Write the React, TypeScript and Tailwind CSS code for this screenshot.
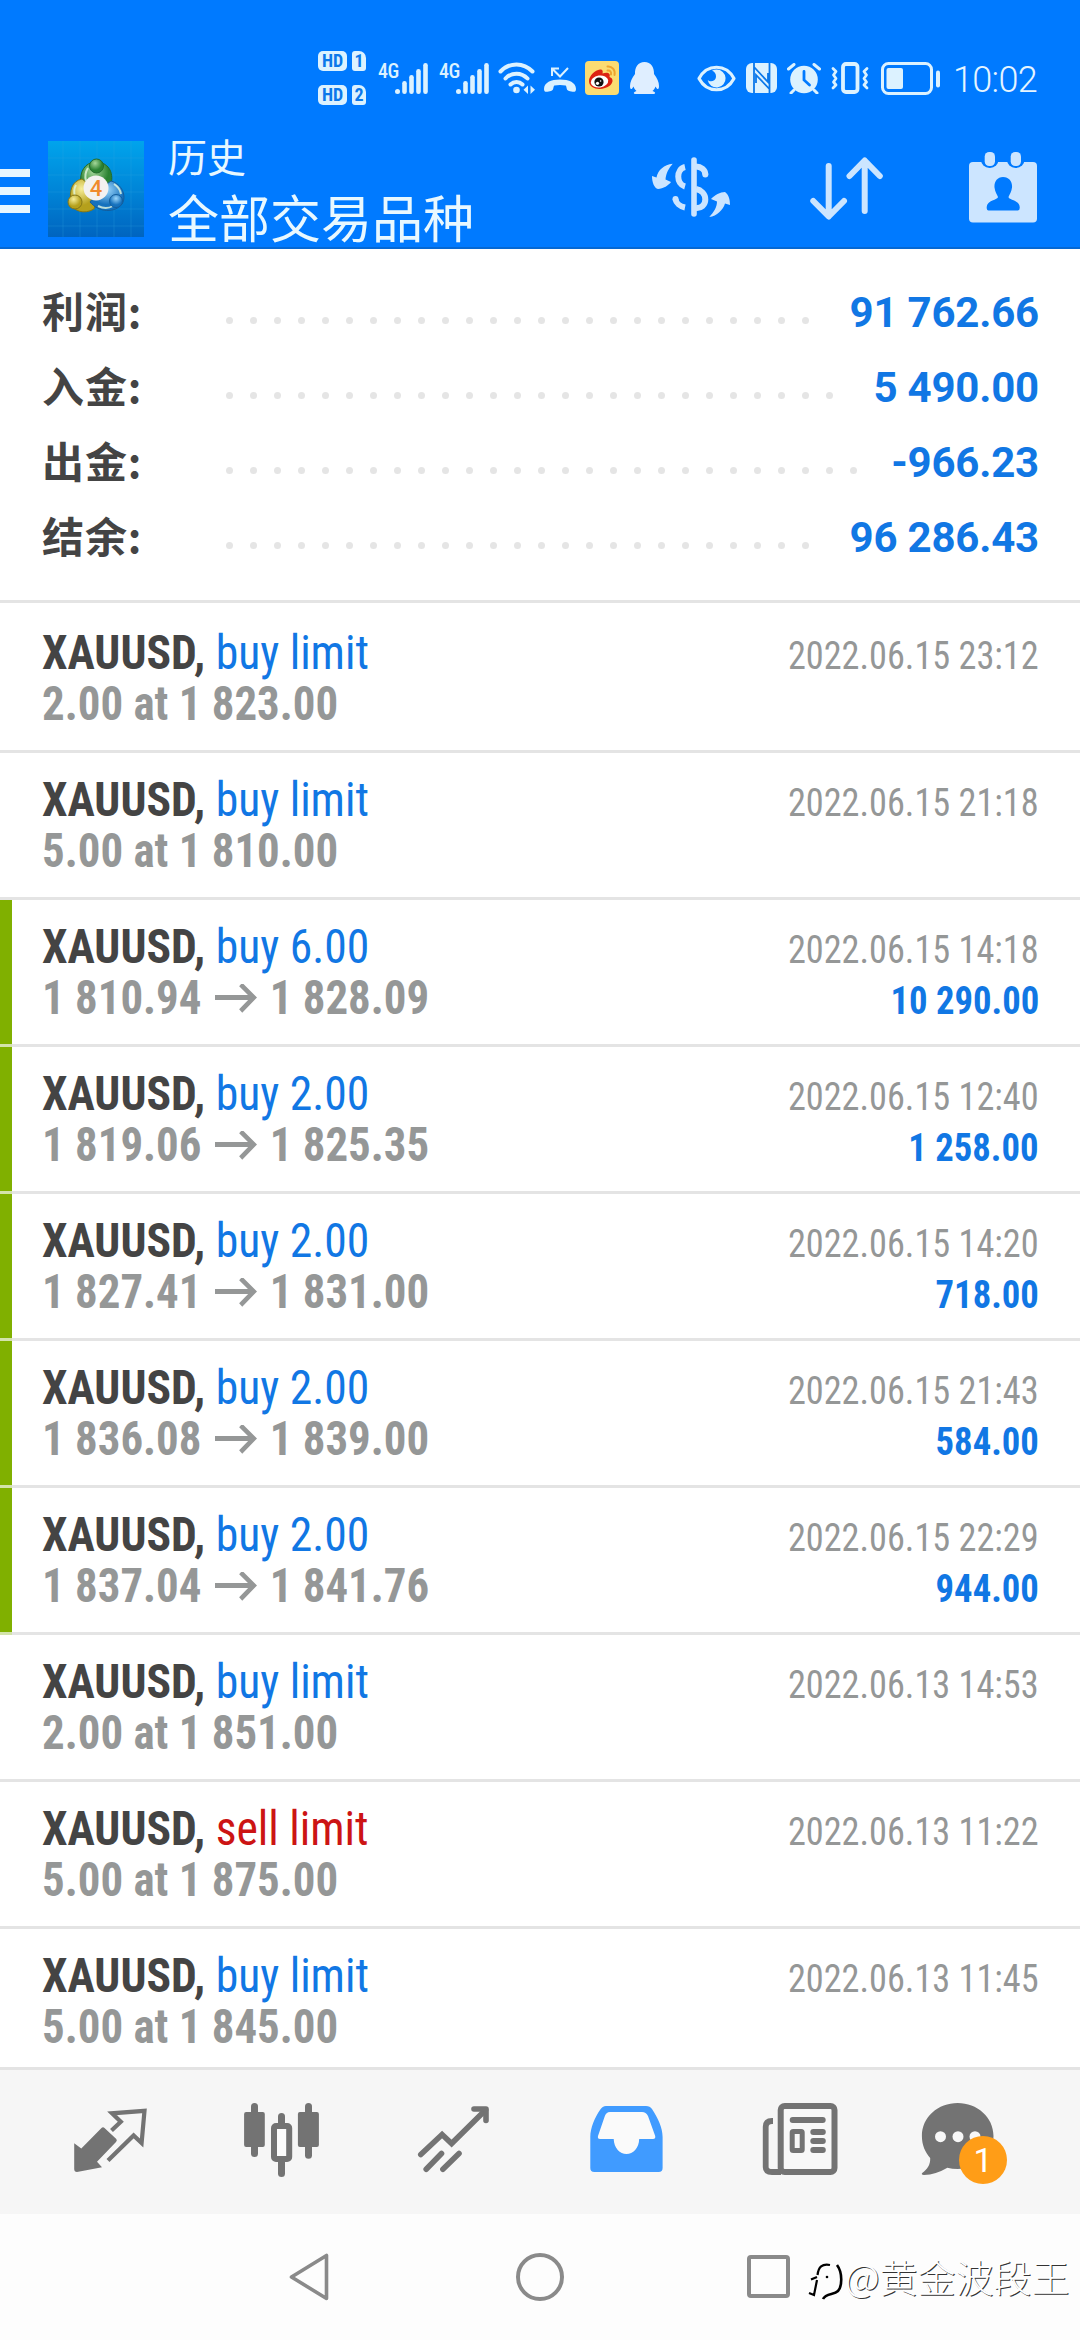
import { type FC, type ReactNode } from "react";
import clsx from "clsx";

interface Deal {
  action: string;
  time: string;
  sell?: boolean;
  order?: string;
  from?: string;
  to?: string;
  profit?: string;
}

const SUMMARY = [
  { label: "利润:", value: "91 762.66" },
  { label: "入金:", value: "5 490.00" },
  { label: "出金:", value: "-966.23" },
  { label: "结余:", value: "96 286.43" },
];

const DEALS: Array<Deal> = [
  { action: "buy limit", time: "2022.06.15 23:12", order: "2.00 at 1 823.00" },
  { action: "buy limit", time: "2022.06.15 21:18", order: "5.00 at 1 810.00" },
  { action: "buy 6.00", time: "2022.06.15 14:18", from: "1 810.94", to: "1 828.09", profit: "10 290.00" },
  { action: "buy 2.00", time: "2022.06.15 12:40", from: "1 819.06", to: "1 825.35", profit: "1 258.00" },
  { action: "buy 2.00", time: "2022.06.15 14:20", from: "1 827.41", to: "1 831.00", profit: "718.00" },
  { action: "buy 2.00", time: "2022.06.15 21:43", from: "1 836.08", to: "1 839.00", profit: "584.00" },
  { action: "buy 2.00", time: "2022.06.15 22:29", from: "1 837.04", to: "1 841.76", profit: "944.00" },
  { action: "buy limit", time: "2022.06.13 14:53", order: "2.00 at 1 851.00" },
  { action: "sell limit", time: "2022.06.13 11:22", sell: true, order: "5.00 at 1 875.00" },
  { action: "buy limit", time: "2022.06.13 11:45", order: "5.00 at 1 845.00" },
];

const SimBadge: FC<{ sim: string }> = ({ sim }) => (
  <div className="flex gap-[5px] h-5 font-['Roboto_Condensed'] font-bold text-[18px] leading-5 text-[#0b78ea] text-center">
    <span className="w-[29px] rounded-[5px] bg-[#dcf2ff]">HD</span>
    <span className="w-[14px] rounded-[3px] rounded-tr-[7px] bg-[#dcf2ff]">{sim}</span>
  </div>
);

const Signal = () => (
  <div className="flex">
    <span className="-mt-0.5 w-[17px] font-['Roboto_Condensed'] font-medium text-[20px] leading-5 tracking-[-0.5px] text-[#dcf2ff]">
      4G
    </span>
    <svg className="w-[33px] h-[31px]" viewBox="0 0 33 31" fill="#dcf2ff">
      <circle cx="2.5" cy="28.5" r="2.5" />
      <rect x="7.2" y="18" width="4.6" height="13" rx="2.3" />
      <rect x="14.2" y="12" width="4.6" height="19" rx="2.3" />
      <rect x="21.2" y="6" width="4.6" height="25" rx="2.3" />
      <rect x="28.2" y="0" width="4.6" height="31" rx="2.3" />
    </svg>
  </div>
);

const StatusBar = () => (
  <div className="flex items-center h-[120px] pl-[318px] pt-9">
    <div className="flex flex-col gap-[14px]">
      <SimBadge sim="1" />
      <SimBadge sim="2" />
    </div>
    <div className="flex gap-[11px] ml-3">
      <Signal />
      <Signal />
    </div>
    {/* wifi */}
    <svg className="ml-[9px] w-[38px] h-8" viewBox="0 0 38 32" fill="none" stroke="#dcf2ff" strokeWidth="4" strokeLinecap="round">
      <path d="M2.5 9.5C11.500 0 25.500 0 34.500 9.500" />
      <path d="M7.500 16.500C13.500 10 23.500 10 29.500 16.500" />
      <path d="M12.500 22.500C16 19 21 19 24.500 22.500" />
      <circle cx="18.500" cy="28" r="3.300" fill="#dcf2ff" stroke="none" />
      <path d="M30 23.500V32L25.500 27.700ZM32.500 23.500V32L37 27.700Z" fill="#dcf2ff" stroke="none" />
    </svg>
    {/* missed call */}
    <svg className="ml-2 mt-1 w-8 h-[26px]" viewBox="0 0 32 26" fill="#dcf2ff">
      <path d="M0 22C0 15.500 7 12.500 16 12.500S32 15.500 32 22C32 26 29 25 24.500 23.800C22 23 23 19 21.500 18.500Q16 17.500 10.500 18.500C9 19 10 23 7.500 23.800C3 25 0 26 0 22Z" />
      <path d="M8 9V1.500H15M8 1.500L16 9.500L24 1" fill="none" stroke="#dcf2ff" strokeWidth="2" />
    </svg>
    {/* weibo */}
    <svg className="ml-[9px] w-[34px] h-[34px]" viewBox="0 0 34 34">
      <rect width="34" height="34" rx="4" fill="#fbdc72" />
      <path d="M4 20C4 15 10 9 15 8.500C18 8.500 18 10.500 17.500 12.500C21 11 26 11 24.500 16C29 17.500 28 22 25 24.500C18 30 4 29 4 20Z" fill="#dc2213" />
      <ellipse cx="14.500" cy="20.500" rx="8.800" ry="6" fill="#fff" transform="rotate(-8 14.500 20.500)" />
      <circle cx="14" cy="21" r="4.600" fill="#111" />
      <circle cx="12.500" cy="22.300" r="1.600" fill="#fff" />
      <circle cx="15.600" cy="20" r=".8" fill="#fff" />
      <path d="M22.500 5.500C27 5 30.500 9 29.500 14M22.500 9.500C25 9 26.500 11 26 13.500" fill="none" stroke="#eda42f" strokeWidth="2" strokeLinecap="round" />
    </svg>
    {/* qq */}
    <svg className="ml-[11px] w-[29px] h-8" viewBox="0 0 29 32" fill="#dfeeff">
      <path d="M14.500 0C8 0 4.800 5 5 12C2 16 0 20 0 24C0 28 1.500 28 3.600 24.500C4.200 26.500 5 27.800 6.500 29C3 30 3 32 6 32H23C26 32 26 30 22.500 29C24 27.800 24.800 26.500 25.400 24.500C27.500 28 29 28 29 24C29 20 27 16 24 12C24.200 5 21 0 14.500 0Z" />
    </svg>
    {/* eye */}
    <svg className="ml-[38px] w-[39px] h-[27px]" viewBox="0 0 39 27">
      <path d="M2 13.500C10 -1.500 29 -1.500 37 13.500C29 28.500 10 28.500 2 13.500Z" fill="none" stroke="#dcf2ff" strokeWidth="3.200" strokeLinejoin="round" />
      <path d="M19.500 4.500A9 9 0 1 1 10.700 15C13 17.500 18.500 16.500 19 12C19.300 9 17.500 6.500 15 5.800Q17 4.500 19.500 4.500Z" fill="#dcf2ff" />
    </svg>
    {/* nfc */}
    <svg className="ml-2.5 w-[31px] h-[30px]" viewBox="0 0 31 30">
      <rect width="31" height="30" rx="6" fill="#dcf2ff" />
      <path d="M8 30V4L22 19V10M8 4V0M23.500 0V26L10 12V20M23.500 26V30" fill="none" stroke="#0b78ea" strokeWidth="1.800" />
    </svg>
    {/* alarm */}
    <svg className="ml-2.5 w-[34px] h-[31px]" viewBox="0 0 34 31">
      <circle cx="17" cy="16.500" r="13.800" fill="#dcf2ff" />
      <path d="M1.500 6L7 1.500M32.500 6L27 1.500M7 27L4 30M27 27L30 30" stroke="#dcf2ff" strokeWidth="3" strokeLinecap="round" />
      <path d="M17 8.500V17L22.500 22" fill="none" stroke="#007aff" strokeWidth="2.800" strokeLinecap="round" />
    </svg>
    {/* vibrate */}
    <svg className="ml-2.5 w-[38px] h-8" viewBox="0 0 38 32" fill="none" stroke="#dcf2ff" strokeLinecap="round" strokeLinejoin="round">
      <rect x="12" y="2" width="14.500" height="28" rx="3" strokeWidth="3.800" />
      <path d="M2 6.500L5 9.500L2.500 13L5 16.500L2.500 20L5 23L2 26M36 6.500L33 9.500L35.500 13L33 16.500L35.500 20L33 23L36 26" strokeWidth="2.800" />
    </svg>
    {/* battery */}
    <svg className="ml-3 w-[60px] h-[33px]" viewBox="0 0 60 33" fill="none">
      <rect x="1.500" y="1.500" width="49" height="30" rx="6" stroke="#dcf2ff" strokeWidth="3" />
      <rect x="5.500" y="6" width="16.500" height="21" rx="2" fill="#dcf2ff" />
      <rect x="55" y="8.500" width="4" height="17" rx="2" fill="#dcf2ff" />
    </svg>
    <span className="ml-3 mt-[3px] font-['Roboto'] font-[350] text-[36px] leading-[36px] tracking-[-0.7px] text-[#e6f5ff]">10:02</span>
  </div>
);

const AppLogo = () => (
  <svg className="w-24 h-24" viewBox="0 0 96 96">
    <defs>
      <linearGradient id="tile" x1="0" y1="0" x2="0" y2="1">
        <stop offset="0" stopColor="#00a4ec" />
        <stop offset=".5" stopColor="#0086d8" />
        <stop offset="1" stopColor="#0064bf" />
      </linearGradient>
      <radialGradient id="green" cx=".4" cy=".3">
        <stop offset="0" stopColor="#a5d79a" />
        <stop offset="1" stopColor="#2b8232" />
      </radialGradient>
      <radialGradient id="yellow" cx=".4" cy=".3">
        <stop offset="0" stopColor="#f7ee9a" />
        <stop offset="1" stopColor="#b5a01c" />
      </radialGradient>
      <radialGradient id="sky" cx=".5" cy=".3">
        <stop offset="0" stopColor="#9bd6fb" />
        <stop offset="1" stopColor="#1671bd" />
      </radialGradient>
    </defs>
    <rect width="96" height="96" fill="url(#tile)" />
    <path d="M0 17H96M0 34H96M0 51H96M0 68H96M0 85H96M15 0V96M32 0V96M49 0V96M66 0V96M83 0V96" stroke="#35a8e4" strokeOpacity=".25" />
    <path d="M48 21C37 21 31 31 33 43L48 52L63 43C66 31 60 21 48 21Z" fill="url(#green)" stroke="#236b2c" />
    <path d="M34 38C24 40 21 49 23 62C25 70 36 74 46 68L50 50Z" fill="url(#yellow)" stroke="#857616" />
    <path d="M63 40C74 43 79 55 74 63C67 72 51 72 42 61L52 48Z" fill="url(#sky)" stroke="#135d9c" />
    <path d="M40 27Q36 33 38 40M28 44Q25 49 27 55M50 65Q58 69 65 65M66 43Q72 47 73 53" fill="none" stroke="#e4f7e0" strokeWidth="2" strokeOpacity=".8" />
    <circle cx="48.500" cy="25" r="7" fill="url(#green)" stroke="#236b2c" />
    <circle cx="27" cy="61" r="7" fill="url(#yellow)" stroke="#857616" />
    <circle cx="68" cy="60" r="6.500" fill="url(#sky)" stroke="#135d9c" />
    <circle cx="48" cy="47" r="12.500" fill="#f3f1f0" />
    <text x="48" y="55" textAnchor="middle" fontFamily="Roboto" fontSize="22" fontWeight="500" fill="#f08a2c">4</text>
  </svg>
);

const Header = () => (
  <header className="h-[249px] bg-[#007aff] border-b-2 border-[#0568d3]">
    <StatusBar />
    <div className="flex h-[127px]">
      <div className="flex flex-col gap-2.5 w-[30px] pt-[49px]">
        <span className="h-2 bg-[#e8f6ff]" />
        <span className="h-2 bg-[#e8f6ff]" />
        <span className="h-2 bg-[#e8f6ff]" />
      </div>
      <div className="ml-[18px] pt-[21px]">
        <AppLogo />
      </div>
      <div className="ml-6 pt-2.5 font-['Noto_Sans_CJK_SC'] text-[#e8f8ff]">
        <div className="text-[39px] leading-[50px]">历史</div>
        <div className="text-[51px] leading-[72px]">全部交易品种</div>
      </div>
      <svg className="ml-[178px] mt-[37px] w-[78px] h-[60px]" viewBox="0 0 78 60" fill="none" stroke="#cce5ff">
        <path d="M33 10C24 12 24 27 33 29.500M44 9.500C49 9.500 53.300 13 53.300 17.500M44 32C49 33 53.300 37 53.300 42.500C53.300 48 49 51.500 44 51M23.500 42C24 46 28 49.500 33 50.500" strokeWidth="6" />
        <path d="M42 3V57" strokeWidth="5.600" strokeLinecap="round" />
        <circle cx="53.300" cy="17.500" r="3" fill="#cce5ff" stroke="none" />
        <circle cx="23.500" cy="42" r="3" fill="#cce5ff" stroke="none" />
        <path d="M20.700 6.700C12 7.500 6 13 4.500 20.500L0 19C0 25 2 31 6 32C11 32 17 28 19 25L13.500 22.500C14 16 17 11 20.700 6.700ZM57.300 60C62 55 65 50 65 44.500L59 42C63 38 68 35 73 35C77 38 78 43 78 48L73 46.500C71 53 65 59 57.300 60Z" fill="#cce5ff" stroke="none" />
      </svg>
      <svg className="ml-20 mt-[37px] w-[74px] h-[64px]" viewBox="0 0 74 64" fill="none" stroke="#cce5ff" strokeWidth="6" strokeLinecap="round" strokeLinejoin="round">
        <path d="M18.700 9V59M3.300 44L18.700 59.500L34 44M54.700 54V4M39.500 19L54.700 3.500L69.800 19" />
      </svg>
      <svg className="ml-[85px] mt-[32px] w-[69px] h-[71px]" viewBox="0 0 69 71">
        <rect y="10" width="68" height="60.500" rx="4" fill="#cce5ff" />
        <rect x="12" y="-6" width="17.500" height="22" rx="8.500" fill="#007aff" />
        <rect x="38" y="-6" width="17.500" height="22" rx="8.500" fill="#007aff" />
        <rect x="15.700" y="0" width="10.300" height="14" rx="4.500" fill="#cce5ff" />
        <rect x="41.700" y="0" width="10.300" height="14" rx="4.500" fill="#cce5ff" />
        <path d="M34 25C28 25 25 30 25.500 35.500C26 40 28 42.500 29 45C29 48 18 48 17.700 55Q17.500 58.500 19.500 58.500H49Q51 58.500 50.700 55C50.500 48 39.500 48 39.500 45C40.500 42.500 42.500 40 43 35.500C43.500 30 40.500 25 34 25Z" fill="#007aff" />
      </svg>
    </div>
  </header>
);

const Summary = () => (
  <section className="flex flex-col h-[354px] pt-[25px] border-b-[3px] border-[#e4e4e4]">
    {SUMMARY.map(({ label, value }) => (
      <div key={label} className="flex items-center h-[75px] pl-[42px] pr-[42px]">
        <span className="w-[184px] -mt-1 font-['Noto_Sans_CJK_SC'] font-bold text-[42px] leading-[60px] tracking-[0.9px] text-[#444]">{label}</span>
        <div className="flex flex-1 flex-wrap gap-x-[17px] h-[7px] mt-[17px] mr-[30px] overflow-hidden">
          {Array.from({ length: 30 }, (_, i) => (
            <span key={i} className="size-[7px] rounded-full bg-[#e5e5e5]" />
          ))}
        </div>
        <span className="mt-[3px] -mr-px font-['Roboto'] font-bold text-[42px] leading-[60px] tracking-[-0.2px] text-[#1177e4]">{value}</span>
      </div>
    ))}
  </section>
);

const DealRow: FC<{ deal: Deal; first: boolean }> = ({ deal, first }) => (
  <div className={clsx("flex shrink-0", first ? "h-[150px]" : "h-[147px]")}>
    <div className={clsx("w-3 border-b-[3px]", deal.profit ? "bg-[#80b000] border-[#d3e3ab]" : "border-[#e4e4e4]")} />
    <div
      className={clsx(
        "flex-1 pl-[30px] pr-[41px] border-b-[3px] border-[#e4e4e4] font-['Roboto_Condensed'] leading-[51px]",
        first ? "pt-6" : "pt-[21px]",
      )}
    >
      <div className="flex items-baseline justify-between h-[51px]">
        <div className="origin-left scale-x-[0.95] text-5xl leading-[51px]">
          <span className="font-bold text-[#444]">XAUUSD,</span>
          <span className={clsx("ml-[11px]", deal.sell ? "text-[#cc1414]" : "text-[#1177e4]")}>{deal.action}</span>
        </div>
        <span className="origin-right scale-x-[0.93] text-[39px] leading-[51px] text-[#959797]">{deal.time}</span>
      </div>
      <div className="flex items-baseline justify-between h-[51px]">
        <div className="flex items-baseline origin-left scale-x-[0.935] text-5xl leading-[51px] font-bold text-[#959797]">
          {deal.order}
          {deal.from && (
            <>
              <span>{deal.from}</span>
              <svg className="mx-3.5 w-[45px] h-[30px]" viewBox="0 0 45 30" fill="none" stroke="#959797" strokeWidth="4.800">
                <path d="M0 13.500H41.500M27.500 0.500L41.500 13.500L27.500 27" />
              </svg>
              <span>{deal.to}</span>
            </>
          )}
        </div>
        <span className="origin-right scale-x-[0.94] text-[39px] leading-[51px] font-bold text-[#1177e4]">{deal.profit}</span>
      </div>
    </div>
  </div>
);

const Tab: FC<{ active?: boolean; children: ReactNode }> = ({ active, children }) => (
  <svg className={clsx("w-[172px] h-36", active ? "text-[#409bff]" : "text-[#737373]")} viewBox="0 0 172 144" fill="currentColor">
    {children}
  </svg>
);

const TabBar = () => (
  <nav className="flex shrink-0 h-[147px] px-6 bg-[#f6f6f6] border-t-[3px] border-[#e3e3e3]">
    <Tab>
      <path d="M50.200 73.300L57.300 78.500L77.500 58Q79 56.500 80.500 58L92.300 69Q93.500 70.500 92 72L73 91.700L78 97.300L53 102Q50.200 102 50.200 99Z" />
      <path d="M87.500 60.500L96.800 51.700L88 43.300L120.500 40.800L117.600 73L109.600 65.500L84 90.500" fill="none" stroke="currentColor" strokeWidth="4.200" />
    </Tab>
    <Tab>
      <rect x="48.100" y="42" width="20.700" height="35" rx="2" />
      <rect x="55" y="33" width="7" height="54" rx="3.500" />
      <rect x="101.900" y="42" width="21" height="35" rx="2" />
      <rect x="109" y="33" width="7" height="55.700" rx="3.500" />
      <rect x="82" y="43" width="7" height="15" rx="3.500" />
      <rect x="82" y="85" width="7" height="22" rx="3.500" />
      <rect x="78" y="56" width="15.200" height="33" rx="2" fill="#fcfcfc" stroke="currentColor" strokeWidth="6" />
    </Tab>
    <Tab>
      <g fill="none" stroke="currentColor" strokeWidth="5.600" strokeLinecap="round">
        <path d="M52.800 84.500L74.100 64.500L83.600 73.500L117.500 40" />
        <path d="M106 39H118V50.500" strokeLinejoin="round" />
        <path d="M58.200 99.200L73.500 83.500M74.900 99.200L91 83.500" />
      </g>
    </Tab>
    <Tab active>
      <path d="M66 36H106Q110 36 112 39C118 48 122.600 58 122.600 67V98Q122.600 102 118.600 102H54.300Q50.300 102 50.300 98V67C50.300 58 55 47 60 40Q62.500 36 66 36Z" />
      <path d="M70 42H102Q106 42 108 46L115.200 66Q115.800 69 113 69H99.200C99 78 93 84 86.500 84C80 84 74 78 73.700 69H60Q57.300 69 58 66L64.500 47Q66 42 70 42Z" fill="#fafafa" />
    </Tab>
    <Tab>
      <path d="M61 51H60Q53.700 51 53.700 57V97Q53.700 102 60 102H69" fill="none" stroke="currentColor" strokeWidth="5.800" />
      <rect x="68.700" y="36" width="53.800" height="66" rx="4" fill="#f8f8f8" stroke="currentColor" strokeWidth="6" />
      <rect x="77.700" y="47" width="36" height="6" rx="3" />
      <rect x="80.200" y="61.500" width="10" height="19" rx="1" fill="none" stroke="currentColor" strokeWidth="5" />
      <rect x="98.300" y="59" width="15.500" height="6" rx="3" />
      <rect x="98.300" y="68" width="15.500" height="6" rx="3" />
      <rect x="98.300" y="77" width="15.500" height="6" rx="3" />
    </Tab>
    <div className="relative w-[172px]">
      <Tab>
        <path d="M73.700 33C93 33 109.500 47 109.500 66S93 99 73.700 99Q68 99 63.400 97.700Q52 104.500 40 105Q36.500 104.500 38.500 102.800C43 99.500 46.500 95 46.200 88C41 82 37.900 75 37.900 66C37.900 47 54 33 73.700 33Z" />
        <circle cx="56.500" cy="66.700" r="5.500" fill="#f8f8f8" />
        <circle cx="74" cy="66.700" r="5.500" fill="#f8f8f8" />
        <circle cx="91" cy="66.700" r="5.500" fill="#f8f8f8" />
      </Tab>
      <span className="absolute left-[75px] top-[66px] flex items-center justify-center size-12 rounded-full bg-[#ff9d17] font-['Roboto'] text-[34px] leading-none text-white">
        1
      </span>
    </div>
  </nav>
);

const SystemNav = () => (
  <div className="flex h-[126px] items-start pl-[289px] pt-[39px] bg-[#fdfdfd]">
    <svg className="w-[40px] h-12" viewBox="0 0 40 48" fill="none" stroke="#8a8a8a" strokeWidth="3.600" strokeLinejoin="round">
      <path d="M2.500 24L37.500 2.500V45.500Z" />
    </svg>
    <span className="ml-[187px] size-[48px] rounded-full border-[4px] border-[#8a8a8a]" />
    <span className="ml-[183px] mt-[2px] w-[43px] h-[43px] rounded-[4px] border-[4px] border-[#8a8a8a]" />
    <div className="flex items-center ml-[18px]">
      <svg className="mt-1 w-[36px] h-[46px]" viewBox="0 0 36 46" fill="none" stroke="#000">
        <path d="M22 8C14 6.500 10.500 10 9.500 18M3 22.500L9 20M9 23L6 38L1 36" strokeWidth="2.200" />
        <path d="M29 8C35 16 34 30 30 34C26 38 18 36 15 42" strokeWidth="2.600" />
        <circle cx="19" cy="20" r="1.300" fill="#000" stroke="none" />
      </svg>
      <span className="-mt-1 ml-px font-['Noto_Sans_CJK_SC'] font-light text-[38px] leading-[46px] text-white [text-shadow:1px_1px_0_#333]">@黄金波段王</span>
    </div>
  </div>
);

export default function App() {
  return (
    <div className="flex flex-col w-[1080px] h-[2340px] overflow-hidden bg-white">
      <Header />
      <Summary />
      <main className="flex flex-col h-[1464px] overflow-hidden">
        {DEALS.map((deal, i) => (
          <DealRow key={i} deal={deal} first={i === 0} />
        ))}
      </main>
      <TabBar />
      <SystemNav />
    </div>
  );
}
